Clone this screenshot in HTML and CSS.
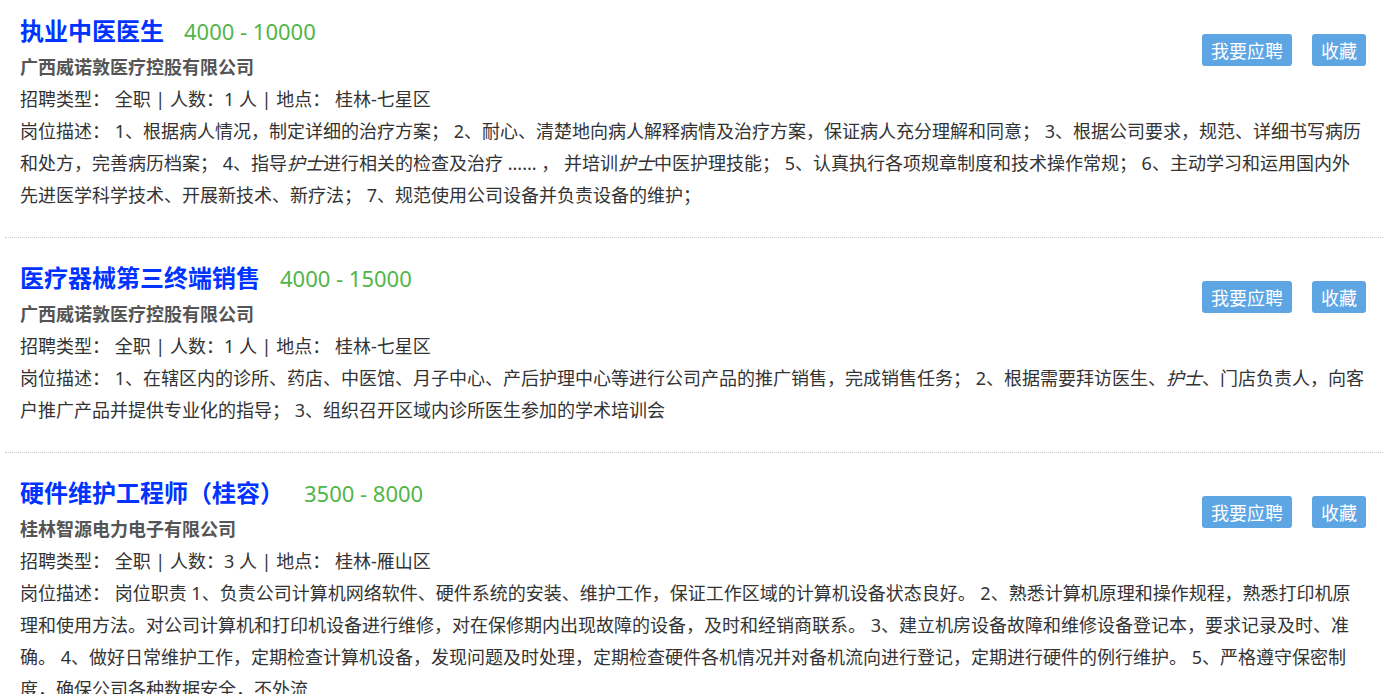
FILE: index.html
```html
<!DOCTYPE html>
<html lang="zh-CN">
<head>
  <meta charset="UTF-8">
  <title>招聘信息</title>
  <link rel="stylesheet" href="styles.css">
</head>
<body>

  <div class="job-list">

    <div class="job">
      <div class="job-head">
        <div class="job-main">
          <h3 class="job-title">执业中医医生<span class="salary">4000 - 10000</span></h3>
          <div class="company">广西威诺敦医疗控股有限公司</div>
        </div>
        <div class="actions">
          <a class="btn" href="#">我要应聘</a>
          <a class="btn" href="#">收藏</a>
        </div>
      </div>
      <div class="info">招聘类型： 全职 | 人数：1 人 | 地点： 桂林-七星区</div>
      <p class="desc">岗位描述： 1、根据病人情况，制定详细的治疗方案； 2、耐心、清楚地向病人解释病情及治疗方案，保证病人充分理解和同意； 3、根据公司要求，规范、详细书写病历和处方，完善病历档案； 4、指导<em>护士</em>进行相关的检查及治疗 ...... ， 并培训<em>护士</em>中医护理技能； 5、认真执行各项规章制度和技术操作常规； 6、主动学习和运用国内外先进医学科学技术、开展新技术、新疗法； 7、规范使用公司设备并负责设备的维护；</p>
    </div>

    <div class="job">
      <div class="job-head">
        <div class="job-main">
          <h3 class="job-title">医疗器械第三终端销售<span class="salary">4000 - 15000</span></h3>
          <div class="company">广西威诺敦医疗控股有限公司</div>
        </div>
        <div class="actions">
          <a class="btn" href="#">我要应聘</a>
          <a class="btn" href="#">收藏</a>
        </div>
      </div>
      <div class="info">招聘类型： 全职 | 人数：1 人 | 地点： 桂林-七星区</div>
      <p class="desc">岗位描述： 1、在辖区内的诊所、药店、中医馆、月子中心、产后护理中心等进行公司产品的推广销售，完成销售任务； 2、根据需要拜访医生、<em>护士</em>、门店负责人，向客户推广产品并提供专业化的指导； 3、组织召开区域内诊所医生参加的学术培训会</p>
    </div>

    <div class="job">
      <div class="job-head">
        <div class="job-main">
          <h3 class="job-title">硬件维护工程师（桂容）<span class="salary">3500 - 8000</span></h3>
          <div class="company">桂林智源电力电子有限公司</div>
        </div>
        <div class="actions">
          <a class="btn" href="#">我要应聘</a>
          <a class="btn" href="#">收藏</a>
        </div>
      </div>
      <div class="info">招聘类型： 全职 | 人数：3 人 | 地点： 桂林-雁山区</div>
      <p class="desc">岗位描述： 岗位职责 1、负责公司计算机网络软件、硬件系统的安装、维护工作，保证工作区域的计算机设备状态良好。 2、熟悉计算机原理和操作规程，熟悉打印机原理和使用方法。对公司计算机和打印机设备进行维修，对在保修期内出现故障的设备，及时和经销商联系。 3、建立机房设备故障和维修设备登记本，要求记录及时、准确。 4、做好日常维护工作，定期检查计算机设备，发现问题及时处理，定期检查硬件各机情况并对备机流向进行登记，定期进行硬件的例行维护。 5、严格遵守保密制度，确保公司各种数据安全，不外流</p>
    </div>

  </div>

</body>
</html>
```

FILE: styles.css
```css
body {
  margin: 0;
  background: #fff;
  font-family: "Noto Sans", "Noto Sans CJK SC", sans-serif;
  color: #333;
}
.job-list {
  margin: -9px 5px 0;
}
.job {
  padding: 20px 17px 26px 15px;
  border-bottom: 1px dotted #ccc;
}
.job-head {
  display: flex;
  justify-content: space-between;
}
.job-title {
  margin: 0;
  font-size: 24px;
  line-height: 40px;
  font-weight: bold;
  color: #0033ff;
}
.salary {
  margin-left: 20px;
  font-size: 22px;
  font-weight: normal;
  color: #52b548;
}
.company {
  font-size: 18px;
  line-height: 32px;
  font-weight: bold;
  color: #555;
}
.actions {
  display: flex;
  gap: 20px;
  margin-top: 23px;
  align-self: flex-start;
}
.btn {
  display: block;
  height: 32px;
  box-sizing: border-box;
  padding: 2px 9px 0;
  line-height: 30px;
  font-size: 18px;
  color: #fff;
  background: #5da6e3;
  border-radius: 3px;
  text-decoration: none;
}
.info {
  font-size: 18px;
  line-height: 32px;
}
.desc {
  margin: 0;
  font-size: 18px;
  line-height: 32px;
}
```
